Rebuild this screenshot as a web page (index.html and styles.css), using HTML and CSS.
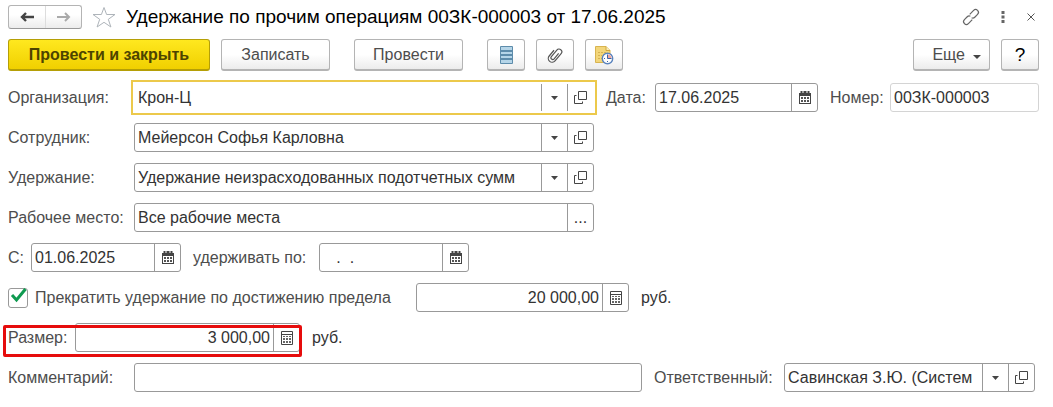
FILE: index.html
```
<!DOCTYPE html>
<html lang="ru">
<head>
    <meta charset="UTF-8">
    <meta name="viewport" content="width=device-width, initial-scale=1.0">
    <title>Удержание по прочим операциям</title>
    <link rel="stylesheet" href="styles.css">
</head>
<body>
    <!-- Общие значки -->
    <svg class="sprite" aria-hidden="true">
        <symbol id="arrow" viewBox="0 0 7 4"><path d="M0 0h7L3.5 4z" fill="#444"/></symbol>
        <symbol id="open" viewBox="0 0 13 13">
            <path d="M4.5.5h8v8h-8zM2.5 4.5h-2v8h8v-2" fill="none" stroke="#444"/>
        </symbol>
        <symbol id="calendar" viewBox="0 0 12 13">
            <path d="M0 2h1.500V0h2v2h1V0h3v2h1V0h2v2H12v11H0z" fill="#444"/>
            <path d="M1 5h10v7H1z" fill="#fff"/>
            <path d="M2 6h2v2H2zM5 6h2v2H5zM8 6h2v2H8zM2 9h2v2H2zM5 9h2v2H5zM8 9h2v2H8z" fill="#555"/>
        </symbol>
        <symbol id="calc" viewBox="0 0 12 14">
            <path d="M.5.5h11v13H.5zM1 3.5h10" fill="none" stroke="#444"/>
            <path d="M2 5h2v1H2zM5 5h2v1H5zM8 5h2v1H8zM2 7h2v2H2zM5 7h2v2H5zM8 7h2v2H8zM2 10h2v2H2zM5 10h2v2H5zM8 10h2v2H8z" fill="#666"/>
        </symbol>
    </svg>

    <header>
        <div class="history">
            <button type="button" aria-label="Назад"><svg width="14" height="10" viewBox="0 0 14 10"><path d="M14 5H3M6 1L2 5l4 4" fill="none" stroke="#444" stroke-width="2.4"/></svg></button>
            <button type="button" aria-label="Вперед"><svg width="14" height="10" viewBox="0 0 14 10"><path d="M0 5h11M8 1l4 4-4 4" fill="none" stroke="#aaa" stroke-width="2"/></svg></button>
        </div>
        <button type="button" class="plain star" aria-label="В избранное">
            <svg width="24" height="22" viewBox="0 0 24 22"><path d="M12 1.500l2.600 7h8.400l-6.700 4.800 2.600 7.700L12 16.300 5.100 21l2.600-7.700L1 8.500h8.400z" fill="#fff" stroke="#aeb4ba"/></svg>
        </button>
        <h1>Удержание по прочим операциям 00ЗК-000003 от 17.06.2025</h1>
        <div class="window-tools">
            <button type="button" class="plain" aria-label="Ссылка">
                <svg width="16" height="16" viewBox="0 0 16 16">
                    <g transform="rotate(-45 8 8)" fill="none" stroke="#666" stroke-width="1.2">
                        <path d="M7 10.800H1.500a2.800 2.800 0 0 1 0-5.600h4a2.800 2.800 0 0 1 2.600 1.800"/>
                        <path d="M9 5.200h5.500a2.800 2.800 0 0 1 0 5.600h-4A2.800 2.800 0 0 1 7.900 9"/>
                    </g>
                </svg>
            </button>
            <button type="button" class="plain" aria-label="Меню">
                <svg width="4" height="12" viewBox="0 0 4 12"><path d="M.5 0h3v3h-3zM.5 4.500h3v3h-3zM.5 9h3v3h-3z" fill="#666"/></svg>
            </button>
            <button type="button" class="plain" aria-label="Закрыть">
                <svg width="8" height="8" viewBox="0 0 8 8"><path d="M.5.5l7 7M7.500.5l-7 7" stroke="#555"/></svg>
            </button>
        </div>
    </header>

    <div class="toolbar">
        <div class="group">
            <button type="button" class="btn main">Провести и закрыть</button>
            <button type="button" class="btn">Записать</button>
        </div>
        <button type="button" class="btn">Провести</button>
        <div class="group">
            <button type="button" class="btn square" aria-label="Движения документа">
                <svg width="13" height="18" viewBox="0 0 13 18">
                    <rect width="13" height="18" rx="1" fill="#5d8cab"/>
                    <path d="M1 1h11v3H1zM1 6h11v2H1zM1 10h11v2H1zM1 14h11v3H1z" fill="#b5d5e8"/>
                </svg>
            </button>
            <button type="button" class="btn square" aria-label="Файлы">
                <svg width="16" height="18" viewBox="0 0 16 18">
                    <path transform="rotate(40 8 9)" d="M9.800 5.500v7a1.800 1.800 0 0 1-3.600 0V4a2.800 2.800 0 0 1 5.600 0v9.500a3.800 3.800 0 0 1-7.600 0V6" fill="none" stroke="#555" stroke-width="1.200"/>
                </svg>
            </button>
            <button type="button" class="btn square" aria-label="История">
                <svg width="20" height="20" viewBox="0 0 20 20">
                    <path d="M1.500 1.500H12l4 4v12H1.500z" fill="#f3d67a" stroke="#d8b450"/>
                    <path d="M12 1.500v4h4" fill="#fbeebb" stroke="#d0a83e"/>
                    <path d="M4 7.500h8M4 10.500h4M4 13.500h4" stroke="#d6b352" stroke-dasharray="2 1"/>
                    <circle cx="13.500" cy="13.500" r="5.200" fill="#fff" stroke="#5a83bd" stroke-width="1.400"/>
                    <path d="M13.500 13.500V9.500a4 4 0 0 1 4 4z" fill="#f0a49b"/>
                    <path d="M13.500 9.500v4h4" fill="none" stroke="#3b64a6"/>
                    <path d="M10 13.500h1M13.500 16v1" stroke="#3b64a6"/>
                </svg>
            </button>
        </div>
        <div class="group right">
            <button type="button" class="btn more">Еще <svg width="8" height="4" viewBox="0 0 8 4"><path d="M0 0h8L4 4z" fill="#444"/></svg></button>
            <button type="button" class="btn square help">?</button>
        </div>
    </div>

    <form>
        <div class="row">
            <label class="name" for="org">Организация:</label>
            <div class="field wide active">
                <input type="text" id="org" value="Крон-Ц">
                <button type="button" aria-label="Выбрать"><svg width="7" height="4"><use href="#arrow"/></svg></button>
                <button type="button" aria-label="Открыть"><svg width="13" height="13"><use href="#open"/></svg></button>
            </div>
            <div class="pair date-pair">
                <label for="date">Дата:</label>
                <div class="field">
                    <input type="text" id="date" value="17.06.2025">
                    <button type="button" aria-label="Календарь"><svg width="12" height="13"><use href="#calendar"/></svg></button>
                </div>
            </div>
            <div class="pair number-pair">
                <label for="number">Номер:</label>
                <div class="field readonly">
                    <input type="text" id="number" value="00ЗК-000003" readonly>
                </div>
            </div>
        </div>

        <div class="row">
            <label class="name" for="employee">Сотрудник:</label>
            <div class="field wide">
                <input type="text" id="employee" value="Мейерсон Софья Карловна">
                <button type="button" aria-label="Выбрать"><svg width="7" height="4"><use href="#arrow"/></svg></button>
                <button type="button" aria-label="Открыть"><svg width="13" height="13"><use href="#open"/></svg></button>
            </div>
        </div>

        <div class="row">
            <label class="name" for="deduction">Удержание:</label>
            <div class="field wide">
                <input type="text" id="deduction" value="Удержание неизрасходованных подотчетных сумм">
                <button type="button" aria-label="Выбрать"><svg width="7" height="4"><use href="#arrow"/></svg></button>
                <button type="button" aria-label="Открыть"><svg width="13" height="13"><use href="#open"/></svg></button>
            </div>
        </div>

        <div class="row">
            <label class="name" for="place">Рабочее место:</label>
            <div class="field wide">
                <input type="text" id="place" value="Все рабочие места">
                <button type="button">...</button>
            </div>
        </div>

        <div class="row">
            <div class="pair from-pair">
                <label for="from">С:</label>
                <div class="field period">
                    <input type="text" id="from" value="01.06.2025">
                    <button type="button" aria-label="Календарь"><svg width="12" height="13"><use href="#calendar"/></svg></button>
                </div>
            </div>
            <div class="pair to-pair">
                <label for="to">удерживать по:</label>
                <div class="field period">
                    <input type="text" id="to" value="&nbsp;&nbsp;&nbsp;.&nbsp;&nbsp;.">
                    <button type="button" aria-label="Календарь"><svg width="12" height="13"><use href="#calendar"/></svg></button>
                </div>
            </div>
        </div>

        <div class="row">
            <label class="check">
                <input type="checkbox" checked>
                <svg width="17" height="17" viewBox="0 0 17 17"><path d="M2 8l4.500 5L15.500 2" fill="none" stroke="#0f9a50" stroke-width="3"/></svg>
                <span>Прекратить удержание по достижению предела</span>
            </label>
            <div class="field limit">
                <input type="text" class="sum" value="20 000,00" aria-label="Предел">
                <button type="button" aria-label="Калькулятор"><svg width="12" height="14"><use href="#calc"/></svg></button>
            </div>
            <span class="unit">руб.</span>
        </div>

        <div class="row">
            <div class="pair marked">
                <label for="size">Размер:</label>
                <div class="field size">
                    <input type="text" id="size" class="sum" value="3 000,00">
                    <button type="button" aria-label="Калькулятор"><svg width="12" height="14"><use href="#calc"/></svg></button>
                </div>
            </div>
            <span class="unit">руб.</span>
        </div>

        <div class="row last">
            <label class="name" for="comment">Комментарий:</label>
            <div class="field comment">
                <input type="text" id="comment">
            </div>
            <div class="pair resp-pair">
                <label for="resp">Ответственный:</label>
                <div class="field resp">
                    <input type="text" id="resp" value="Савинская З.Ю. (Систем">
                    <button type="button" aria-label="Выбрать"><svg width="7" height="4"><use href="#arrow"/></svg></button>
                    <button type="button" aria-label="Открыть"><svg width="13" height="13"><use href="#open"/></svg></button>
                </div>
            </div>
        </div>
    </form>
</body>
</html>
```
FILE: styles.css
```
* {
    box-sizing: border-box;
}

body {
    margin: 0;
    padding: 5px 14px 14px 8px;
    background-color: #fff;
    color: #4d4d4d;
    font-family: "Liberation Sans", Arial, sans-serif;
    font-size: 16px;
    line-height: 20px;
}

button, input {
    font: inherit;
    color: inherit;
    margin: 0;
}

button {
    display: flex;
    align-items: center;
    justify-content: center;
    cursor: pointer;
}

.sprite {
    display: none;
}

svg {
    flex: none;
}

/* Заголовок окна */
header {
    display: flex;
    align-items: center;
    height: 24px;
}

.history {
    display: flex;
    border: 1px solid #b4b4b4;
    border-bottom-color: #999;
    border-radius: 3px;
    height: 24px;
    background: linear-gradient(#fff 40%, #ececec);
}

.history button {
    width: 36px;
    padding: 0;
    border: none;
    background: none;
}

.history button + button {
    border-left: 1px solid #ddd;
}

.plain {
    padding: 0;
    border: none;
    background: none;
}

.plain svg {
    overflow: visible;
}

.star {
    margin: 0 10px;
}

h1 {
    margin: 0;
    font-size: 19px;
    font-weight: normal;
    color: #000;
    white-space: nowrap;
}

.window-tools {
    display: flex;
    align-items: center;
    gap: 22px;
    margin-left: auto;
    padding-right: 4px;
}

/* Командная панель */
.toolbar {
    display: flex;
    gap: 24px;
    margin-top: 10px;
}

.group {
    display: flex;
    gap: 11px;
}

.btn {
    min-width: 109px;
    height: 32px;
    padding: 0 8px;
    border: 1px solid #b4b4b4;
    border-bottom: 2px solid #b4b4b4;
    border-radius: 3px;
    background: linear-gradient(#fff 50%, #ececec);
    white-space: nowrap;
}

.btn:hover {
    background: #f0f0f0;
}

.main {
    min-width: 202px;
    border-color: #b59f06;
    background: linear-gradient(#ffe81f, #f0d000);
    color: #4d4400;
    font-weight: bold;
}

.main:hover {
    background: #f0d000;
}

.square {
    min-width: 38px;
    padding: 0;
}

.right {
    margin-left: auto;
}

.more {
    min-width: 77px;
    gap: 8px;
    justify-content: flex-end;
}

.more svg {
    margin-top: 4px;
}

.help {
    color: #000;
    font-size: 19px;
}

/* Форма */
form {
    display: flex;
    flex-direction: column;
    gap: 11px;
    margin-top: 12px;
}

.row {
    display: flex;
    align-items: center;
    gap: 12px;
}

.name {
    flex: none;
    width: 126px;
    margin-right: -12px;
    white-space: nowrap;
}

.pair {
    display: flex;
    align-items: center;
    flex: none;
}

.pair label {
    flex: none;
    white-space: nowrap;
}

.field {
    display: flex;
    height: 29px;
    border: 1px solid #999;
    border-radius: 3px;
    background-color: #fff;
    color: #333;
}

.field input {
    flex: 1;
    min-width: 0;
    width: 100%;
    padding: 0 3px;
    border: none;
    outline: none;
    background: none;
}

.field button {
    flex: none;
    width: 26px;
    padding: 0;
    border: none;
    border-left: 1px solid #999;
    background: none;
}

.field .sum {
    text-align: right;
}

.wide {
    flex: 0 1 460px;
}

.active {
    border-color: transparent;
    outline: 2px solid #ecc94b;
    outline-offset: 1px;
    border-radius: 0;
}

.date-pair label {
    width: 49px;
}

.date-pair .field {
    width: 163px;
}

.number-pair {
    flex: 1;
}

.number-pair label {
    width: 60px;
}

.number-pair .field {
    flex: 1;
    min-width: 0;
}

.readonly {
    border-color: #d4d4d4;
}

.from-pair label {
    width: 23px;
}

.to-pair label {
    width: 126px;
}

.period {
    width: 150px;
}

.check {
    position: relative;
    display: flex;
    align-items: center;
    gap: 7px;
    min-width: 396px;
    white-space: nowrap;
}

.check input {
    appearance: none;
    width: 20px;
    height: 20px;
    border: 1px solid #999;
    border-radius: 3px;
}

/* галочка поверх рамки флажка */
.check svg {
    position: absolute;
    left: 2px;
    top: -1px;
}

.check input:not(:checked) + svg {
    display: none;
}

.limit {
    width: 213px;
}

.unit {
    color: #333;
}

.marked {
    position: relative;
}

/* красная рамка вокруг размера */
.marked::after {
    content: "";
    position: absolute;
    top: 2px;
    right: -2px;
    bottom: -5px;
    left: -5px;
    border: 3px solid #e60c0c;
    border-radius: 2px;
    pointer-events: none;
}

.marked label {
    width: 67px;
}

.size {
    width: 225px;
}

.last {
    padding-right: 4px;
}

.comment {
    flex: 1;
}

.resp-pair label {
    width: 130px;
}

.resp {
    width: 251px;
}
```
